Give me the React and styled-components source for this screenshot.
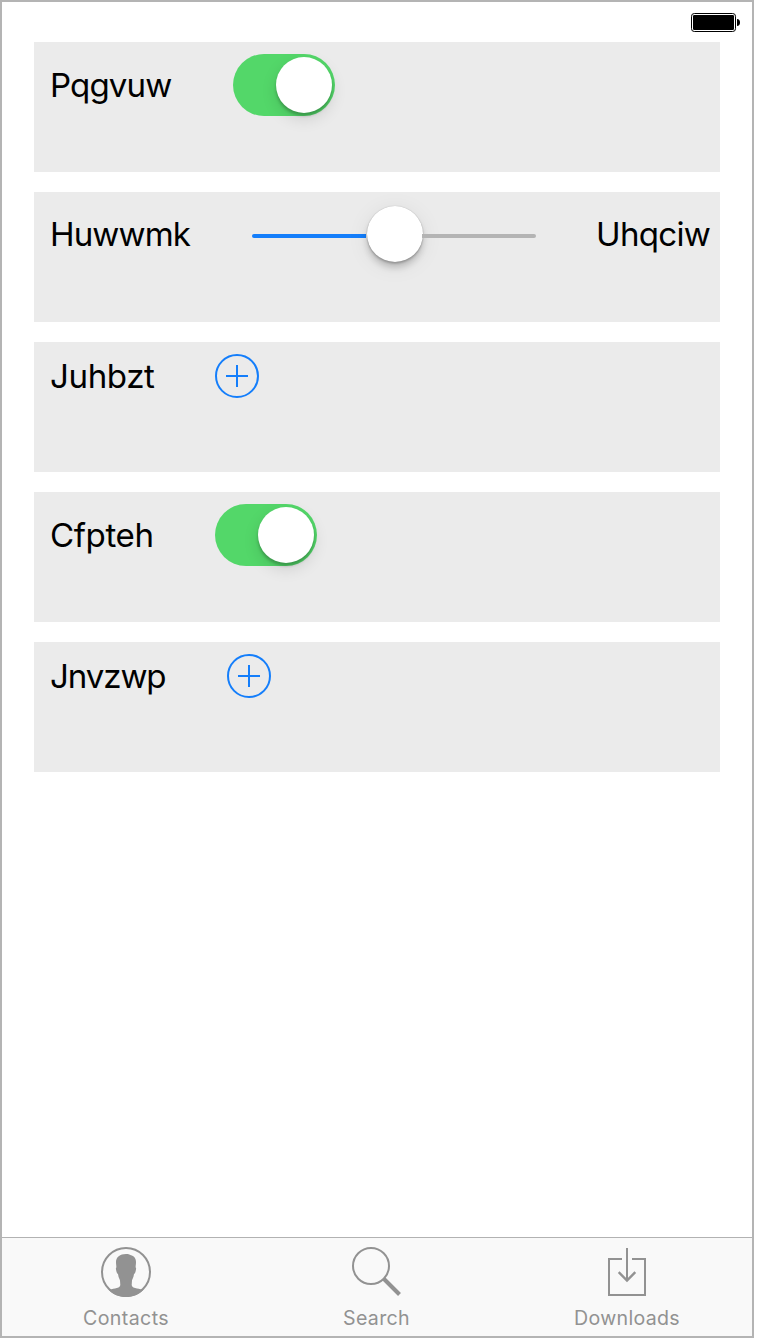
import React from "react";
import styled, { createGlobalStyle } from "styled-components";

const GlobalStyle = createGlobalStyle`
  * { box-sizing: border-box; }
  body { margin: 0; background: #fff; font-family: Inter, "Liberation Sans", sans-serif; }
`;

const Screen = styled.div`
  display: flex;
  flex-direction: column;
  width: 754px;
  height: 1338px;
  border: 2px solid #b4b4b4;
  background: #fff;
`;

const StatusBar = styled.header`
  display: flex;
  justify-content: flex-end;
  height: 40px;
  padding: 11px 12px 0 0;
`;

const CardList = styled.main`
  flex: 1;
  display: flex;
  flex-direction: column;
  gap: 20px;
  padding: 0 32px;
`;

const Card = styled.section`
  display: flex;
  align-items: flex-start;
  height: 130px;
  padding: 12px 0 0 16px;
  background: #ebebeb;
`;

const CardRow = styled.div`
  display: flex;
  align-items: center;
  gap: 60px;
  height: ${(p) => p.$height}px;
`;

const Label = styled.span`
  width: ${(p) => p.$width}px;
  font-size: 33.1px;
  line-height: 40px;
  letter-spacing: ${(p) => p.$tracking || 0}px;
  white-space: nowrap;
  color: #000;
`;

const SwitchTrack = styled.div`
  display: flex;
  justify-content: flex-end;
  width: 102px;
  height: 62px;
  padding: 3px;
  border-radius: 31px;
  background: #53d769;
`;

const Knob = styled.div`
  width: 56px;
  height: 56px;
  border-radius: 50%;
  background: #fff;
`;

const SwitchKnob = styled(Knob)`
  box-shadow: 0 6px 16px rgba(0, 0, 0, 0.12), 0 3px 3px rgba(0, 0, 0, 0.22);
`;

const SliderBox = styled.div`
  display: flex;
  align-items: center;
  width: 284px;
  height: 56px;
`;

const SliderLine = styled.div`
  flex: 1;
  height: 4px;
  margin-top: 4px;
  background: ${(p) => (p.$filled ? "#147efb" : "#b4b4b4")};
  border-radius: ${(p) => (p.$filled ? "2px 0 0 2px" : "0 2px 2px 0")};
`;

const SliderKnob = styled(Knob)`
  flex: none;
  margin: 0 -1px 0 1px;
  box-shadow: 0 0 1px rgba(0, 0, 0, 0.3), 0 6px 6px rgba(0, 0, 0, 0.16),
    0 2px 2px rgba(0, 0, 0, 0.18), 0 4px 22px rgba(0, 0, 0, 0.08);
`;

const TabBar = styled.nav`
  display: flex;
  height: 99px;
  border-top: 1px solid #b2b2b2;
  background: #f9f9f9;
`;

const Tab = styled.div`
  flex: 1;
  display: flex;
  flex-direction: column;
  align-items: center;
  padding-top: 9px;
  color: #929292;
`;

const TabLabel = styled.span`
  margin-top: 9px;
  margin-right: ${(p) => p.$inset || 0}px;
  font-size: 19.6px;
  line-height: 24px;
  letter-spacing: ${(p) => p.$tracking}px;
`;

const TabIcon = styled.svg`
  width: 50px;
  height: 50px;
  margin-right: ${(p) => p.$inset || 0}px;
`;

const Switch = () => (
  <SwitchTrack>
    <SwitchKnob />
  </SwitchTrack>
);

const Slider = () => (
  <SliderBox>
    <SliderLine $filled />
    <SliderKnob />
    <SliderLine />
  </SliderBox>
);

const AddIcon = () => (
  <svg width="44" height="44" viewBox="0 0 44 44" fill="none" stroke="#147efb" strokeWidth="2">
    <circle cx="22" cy="22" r="21" />
    <path d="M11 22H33M22 11V33" />
  </svg>
);

const BatteryIcon = () => (
  <svg width="49" height="19" viewBox="0 0 49 19">
    <rect x="0.5" y="0.5" width="44" height="18" rx="2.8" fill="#fff" stroke="#000" />
    <rect x="2" y="2" width="41" height="15" rx="1.3" />
    <path d="M46 6C48 6 49 7.5 49 9.5S48 13 46 13Z" />
  </svg>
);

const ContactsIcon = () => (
  <TabIcon viewBox="0 0 50 50" $inset={2}>
    <circle cx="25" cy="25" r="24" fill="none" stroke="currentColor" strokeWidth="2" />
    <path
      fill="currentColor"
      d="M25 7C19 7 15 10 15 15C15 17.5 15.5 19 15.3 20.5C14.5 21 15 23 15.6 25C16 26.5 16.8 26.5 17.1 27.5C17.4 30.5 18.6 31.5 19 33.5L19.3 38C19 40.5 16.5 41 14 41.5C11.5 42 9.5 42.3 8 43.2C12 47.3 18 50 25 50S38 47.3 42 43.2C40.5 42.3 38.5 42 36 41.5C33.5 41 31 40.5 30.7 38L31 33.5C31.4 31.5 32.6 30.5 32.9 27.5C33.2 26.5 34 26.5 34.4 25C35 23 35.5 21 34.7 20.5C34.5 19 35 17.5 35 15C35 11 32.5 8.5 30 8.2C28.5 7.4 27 7 25 7Z"
    />
  </TabIcon>
);

const SearchIcon = () => (
  <TabIcon viewBox="0 0 50 50" fill="none" stroke="currentColor" $inset={2}>
    <circle cx="20" cy="19" r="18" strokeWidth="2" />
    <path d="M32.5 31.5L48.5 47.5" strokeWidth="4" />
  </TabIcon>
);

const DownloadsIcon = () => (
  <TabIcon viewBox="0 0 50 50" fill="none" stroke="currentColor" strokeWidth="2">
    <path d="M20 12H7V48H43V12H30M25 1V33" />
    <path d="M16.7 25.2L25 33.5L33.3 25.2" strokeWidth="2.4" />
  </TabIcon>
);

export default function App() {
  return (
    <>
      <GlobalStyle />
      <Screen>
        <StatusBar>
          <BatteryIcon />
        </StatusBar>
        <CardList>
          <Card>
            <CardRow $height={62}>
              <Label $width={123} $tracking={-0.9}>Pqgvuw</Label>
              <Switch />
            </CardRow>
          </Card>
          <Card>
            <CardRow $height={60}>
              <Label $width={142} $tracking={-0.9}>Huwwmk</Label>
              <Slider />
              <Label $width={115} $tracking={-0.7}>Uhqciw</Label>
            </CardRow>
          </Card>
          <Card>
            <CardRow $height={44}>
              <Label $width={105} $tracking={-0.4}>Juhbzt</Label>
              <AddIcon />
            </CardRow>
          </Card>
          <Card>
            <CardRow $height={62}>
              <Label $width={105} $tracking={-0.4}>Cfpteh</Label>
              <Switch />
            </CardRow>
          </Card>
          <Card>
            <CardRow $height={44}>
              <Label $width={117} $tracking={-1.1}>Jnvzwp</Label>
              <AddIcon />
            </CardRow>
          </Card>
        </CardList>
        <TabBar>
          <Tab>
            <ContactsIcon />
            <TabLabel $tracking={0.4} $inset={2}>Contacts</TabLabel>
          </Tab>
          <Tab>
            <SearchIcon />
            <TabLabel $tracking={0.3} $inset={1}>Search</TabLabel>
          </Tab>
          <Tab>
            <DownloadsIcon />
            <TabLabel $tracking={0.3}>Downloads</TabLabel>
          </Tab>
        </TabBar>
      </Screen>
    </>
  );
}
